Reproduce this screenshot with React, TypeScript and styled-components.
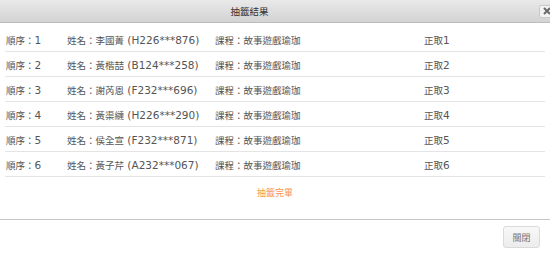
import React from "react";
import styled, { createGlobalStyle } from "styled-components";

const GlobalStyle = createGlobalStyle`
  html, body {
    margin: 0;
    padding: 0;
    background: #ffffff;
    overflow: hidden;
  }
  body {
    font-family: "DejaVu Sans", Verdana, "Noto Sans CJK TC", sans-serif;
    color: #555;
  }
`;

const Dialog = styled.div`
  width: 550px;
  height: 257px;
  display: flex;
  flex-direction: column;
  background: #fff;
`;

const TitleBar = styled.div`
  height: 22px;
  display: flex;
  align-items: center;
  background: linear-gradient(#e9e9e9, #d3d3d3);
  border-bottom: 1px solid #bdbdbd;
`;

const Title = styled.div`
  flex: 1;
  text-align: center;
  padding-right: 40px;
  font-family: "Noto Sans CJK TC", sans-serif;
  font-size: 9.5px;
  color: #333;
`;

const CloseButton = styled.div`
  width: 13px;
  height: 11px;
  margin-right: -4px;
  display: flex;
  align-items: center;
  justify-content: center;
  background: #f2f2f2;
  border: 1px solid #c9c9c9;
  border-radius: 2px;
`;

const List = styled.div`
  padding: 4px 5px 0 5px;
`;

const Row = styled.div`
  display: grid;
  grid-template-columns: 61px 148px 209px 1fr;
  align-items: center;
  padding: 1px 0 0 1px;
  box-sizing: border-box;
  height: 25px;
  border-bottom: 1px solid #e4e4e4;
  font-size: 10.5px;
  color: #555;
  white-space: nowrap;
`;

const Han = styled.span`
  font-family: "Noto Sans CJK TC", sans-serif;
  font-size: 9.5px;
`;

const Message = styled.div`
  flex: 1;
  display: flex;
  align-items: center;
  justify-content: center;
  padding-bottom: 11px;
  border-bottom: 1px solid #c6c6c6;
  font-family: "Noto Sans CJK TC", sans-serif;
  font-size: 9px;
  color: #f7964f;
`;

const Footer = styled.div`
  height: 37px;
  display: flex;
  justify-content: flex-end;
  align-items: flex-start;
  padding: 6px 10px 0 0;
  box-sizing: border-box;
`;

const Button = styled.button`
  width: 37px;
  height: 22px;
  padding: 0;
  background: linear-gradient(#f8f8f8, #ececec);
  border: 1px solid #dadada;
  border-radius: 3px;
  font-family: "Noto Sans CJK TC", sans-serif;
  font-size: 9px;
  color: #777;
`;

const rows = [
  { seq: 1, name: "李國菁", id: "H226***876", result: 1 },
  { seq: 2, name: "黃楷喆", id: "B124***258", result: 2 },
  { seq: 3, name: "謝芮恩", id: "F232***696", result: 3 },
  { seq: 4, name: "黃渠縺", id: "H226***290", result: 4 },
  { seq: 5, name: "侯全宣", id: "F232***871", result: 5 },
  { seq: 6, name: "黃子芹", id: "A232***067", result: 6 },
];

const App = (): React.ReactElement => {
  return (
    <Dialog>
      <GlobalStyle />
      <TitleBar>
        <Title>抽籤結果</Title>
        <CloseButton>
          <svg width="8" height="8" viewBox="0 0 8 8">
            <path d="M1 1L7 7M7 1L1 7" stroke="#6a6a6a" strokeWidth="2" />
          </svg>
        </CloseButton>
      </TitleBar>
      <List>
        {rows.map((r) => (
          <Row key={r.seq}>
            <span>
              <Han>順序：</Han>
              {r.seq}
            </span>
            <span>
              <Han>姓名：{r.name}</Han> ({r.id})
            </span>
            <span>
              <Han>課程：故事遊戲瑜珈</Han>
            </span>
            <span>
              <Han>正取</Han>
              {r.result}
            </span>
          </Row>
        ))}
      </List>
      <Message>抽籤完畢</Message>
      <Footer>
        <Button>關閉</Button>
      </Footer>
    </Dialog>
  );
};

export default App;
